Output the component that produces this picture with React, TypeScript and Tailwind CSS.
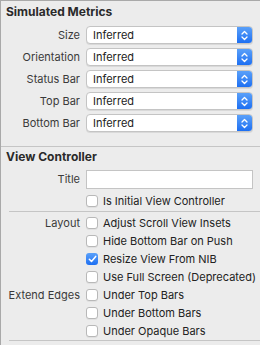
import React from "react";

const font = { fontFamily: "Inter, 'Liberation Sans', sans-serif" };

function Popup({ value }: { value: string }) {
  return (
    <div className="flex h-[18px] w-[167px] items-stretch overflow-hidden rounded-[4px] border border-[#c4c4c4] bg-white shadow-[0_1px_0_rgba(0,0,0,0.08)]">
      <div className="flex flex-1 items-center whitespace-nowrap pl-[6px] text-[11px] text-[#222]">{value}</div>
      <div className="flex w-[15px] items-center justify-center bg-gradient-to-b from-[#5aa0f9] to-[#1c6ff2]">
        <svg width="7" height="11" viewBox="0 0 7 11" fill="none">
          <path d="M1 4 L3.5 1.5 L6 4" stroke="white" strokeWidth="1.3" strokeLinecap="round" strokeLinejoin="round" />
          <path d="M1 7 L3.5 9.5 L6 7" stroke="white" strokeWidth="1.3" strokeLinecap="round" strokeLinejoin="round" />
        </svg>
      </div>
    </div>
  );
}

function Check({ checked, label }: { checked?: boolean; label: string }) {
  return (
    <div className="flex items-center whitespace-nowrap">
      {checked ? (
        <div className="flex h-[12px] w-[12px] shrink-0 items-center justify-center rounded-[3px] bg-gradient-to-b from-[#5aa0f9] to-[#1c6ff2]">
          <svg width="9" height="8" viewBox="0 0 9 8" fill="none">
            <path d="M1.3 4.2 L3.5 6.4 L7.7 1.4" stroke="white" strokeWidth="1.5" strokeLinecap="round" strokeLinejoin="round" />
          </svg>
        </div>
      ) : (
        <div className="h-[12px] w-[12px] shrink-0 rounded-[3px] border border-[#b8b8b8] bg-white shadow-[0_1px_0_rgba(0,0,0,0.05)]" />
      )}
      <span className="ml-[5px] text-[11px] text-[#222]">{label}</span>
    </div>
  );
}

export default function App() {
  const metrics = ["Size", "Orientation", "Status Bar", "Top Bar", "Bottom Bar"];
  const checks: [string, string, boolean][] = [
    ["Layout", "Adjust Scroll View Insets", false],
    ["", "Hide Bottom Bar on Push", false],
    ["", "Resize View From NIB", true],
    ["", "Use Full Screen (Deprecated)", false],
    ["Extend Edges", "Under Top Bars", false],
    ["", "Under Bottom Bars", false],
    ["", "Under Opaque Bars", false],
  ];
  return (
    <div style={font} className="h-[345px] w-[260px] overflow-hidden border-l border-t border-[#a9a9a9] bg-[#ececec]">
      <div className="flex h-[22px] items-center pl-[5px] text-[12px] font-bold text-[#2a2a2a]">Simulated Metrics</div>
      <div className="flex flex-col pt-[1px]">
        {metrics.map((m) => (
          <div key={m} className="flex h-[22px] items-center">
            <div className="w-[79px] shrink-0 whitespace-nowrap text-right text-[11px] text-[#3a3a3a]">{m}</div>
            <div className="ml-[6px]">
              <Popup value="Inferred" />
            </div>
          </div>
        ))}
      </div>
      <div className="mt-[12px] h-px bg-[#c5c5c5]" />
      <div className="flex h-[19px] items-center pl-[5px] text-[12px] font-bold text-[#2a2a2a]">View Controller</div>
      <div className="flex h-[26px] items-center">
        <div className="w-[79px] shrink-0 text-right text-[11px] text-[#3a3a3a]">Title</div>
        <div className="ml-[6px] h-[19px] w-[167px] border border-[#c4c4c4] bg-white" />
      </div>
      <div className="flex h-[18px] items-center">
        <div className="w-[79px] shrink-0" />
        <div className="ml-[6px]">
          <Check label="Is Initial View Controller" />
        </div>
      </div>
      <div className="ml-[8px] mt-[1px] h-px bg-[#c5c5c5]" />
      <div className="flex flex-col pt-[2px]">
        {checks.map(([l, t, c], i) => (
          <div key={i} className="flex h-[18px] items-center">
            <div className="w-[79px] shrink-0 whitespace-nowrap text-right text-[11px] text-[#3a3a3a]">{l}</div>
            <div className="ml-[6px]">
              <Check label={t} checked={c} />
            </div>
          </div>
        ))}
      </div>
      <div className="ml-[8px] h-px bg-[#c5c5c5]" />
    </div>
  );
}
